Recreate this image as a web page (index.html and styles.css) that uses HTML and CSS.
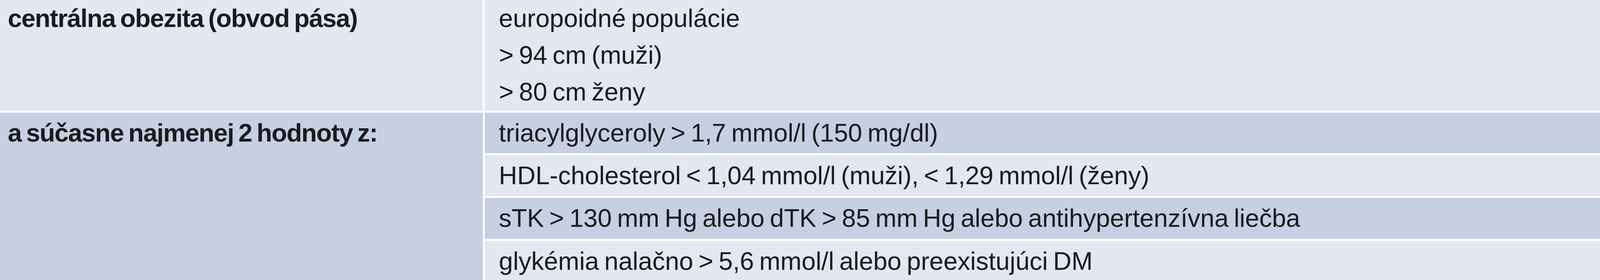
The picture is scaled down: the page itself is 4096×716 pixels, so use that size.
FILE: index.html
```html
<!DOCTYPE html>
<html lang="sk">
<head>
<meta charset="utf-8">
<title>Metabolický syndróm – kritériá</title>
<link rel="stylesheet" href="styles.css">
</head>
<body>
<div class="table">
  <div class="cell head light first">centrálna obezita (obvod pása)</div>
  <div class="cell value light first">
    <div class="line">europoidné populácie</div>
    <div class="line">&gt; 94 cm (muži)</div>
    <div class="line">&gt; 80 cm ženy</div>
  </div>
  <div class="cell head dark span">a súčasne najmenej 2 hodnoty z:</div>
  <div class="cell value dark">triacylglyceroly &gt; 1,7 mmol/l (150 mg/dl)</div>
  <div class="cell value light">HDL-cholesterol &lt; 1,04 mmol/l (muži), &lt; 1,29 mmol/l (ženy)</div>
  <div class="cell value dark">sTK &gt; 130 mm Hg alebo dTK &gt; 85 mm Hg alebo antihypertenzívna liečba</div>
  <div class="cell value light">glykémia nalačno &gt; 5,6 mmol/l alebo preexistujúci DM</div>
</div>
</body>
</html>
```
FILE: styles.css
```css
html, body {
  margin: 0;
  padding: 0;
  background: #ffffff;
}
body {
  width: 4096px;
  height: 716px;
  overflow: hidden;
  font-family: "Liberation Sans", Arial, sans-serif;
  font-size: 65px;
  color: #1b1b1d;
}
.table {
  display: grid;
  grid-template-columns: 1236px 1fr;
  grid-template-rows: 283px 104px 104px 105px 100px;
  column-gap: 5px;
  row-gap: 5px;
  height: 716px;
  background: #ffffff;
}
.cell {
  line-height: 94px;
  word-spacing: -4.5px;
  white-space: nowrap;
  padding-top: 5px;
  box-sizing: border-box;
}
.cell.first {
  padding-top: 0;
}
.light { background: #e2e7f1; }
.dark { background: #c7cfe2; }
.head {
  font-weight: bold;
  letter-spacing: -1.5px;
  padding-left: 20px;
}
.value {
  padding-left: 36px;
}
.span {
  grid-row: 2 / 6;
}
```
